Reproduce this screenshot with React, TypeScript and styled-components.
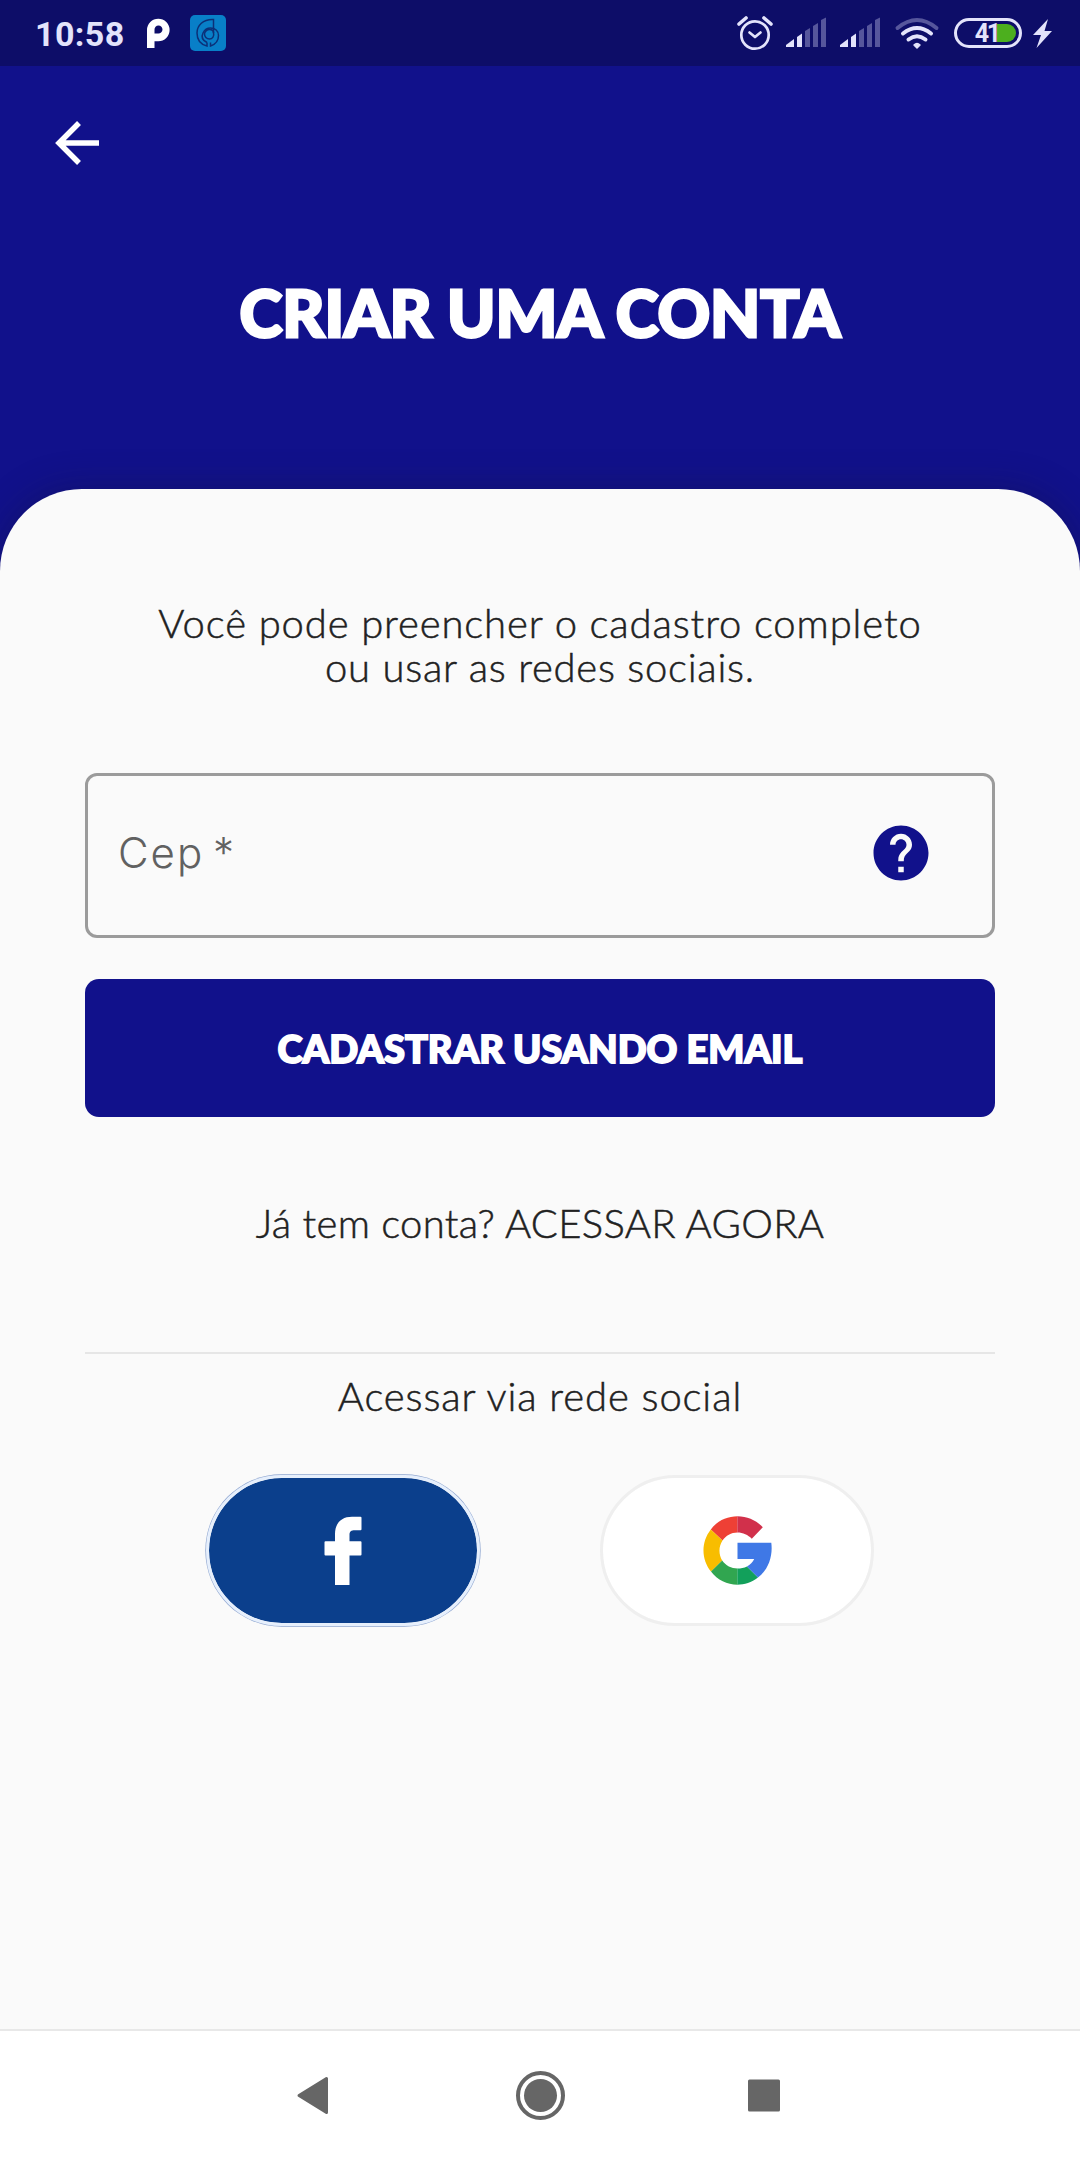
import React from "react";
import styled, { createGlobalStyle } from "styled-components";
import { MdHelp } from "react-icons/md";

const navy = "#11118b";
const light = "#e3e3fb";
const dim = "#56569c";

const GlobalStyle = createGlobalStyle`
  * { box-sizing: border-box; }
  html, body { margin: 0; padding: 0; background: #fafafa; }
  button { border: 0; padding: 0; margin: 0; background: none; font: inherit; }
  svg { display: block; flex: none; }
`;

const Screen = styled.div`
  width: 1080px;
  height: 2160px;
  display: flex;
  flex-direction: column;
  overflow: hidden;
  background: ${navy};
  font-family: Lato, "Open Sans", sans-serif;
`;

const StatusBar = styled.div`
  height: 66px;
  flex: none;
  display: flex;
  align-items: center;
  justify-content: space-between;
  padding: 0 25px 0 35px;
  background: #0d0d68;
`;

const StatusGroup = styled.div`
  display: flex;
  align-items: center;
`;

const Clock = styled.span`
  font: 700 34px/40px Roboto, sans-serif;
  letter-spacing: 0.4px;
  color: ${light};
  width: 111px;
  padding-top: 2px;
`;

const Battery = styled.div`
  width: 68px;
  height: 30px;
  margin: 0 9px 0 8px;
  border: 3px solid ${light};
  border-radius: 15px;
  padding: 3px;
  display: flex;
  justify-content: flex-end;
  align-items: center;
`;

const Level = styled.span`
  font: 700 25px/18px Roboto, sans-serif;
  letter-spacing: -2.2px;
  color: ${light};
  position: relative;
  z-index: 1;
  margin-right: -2px;
  padding-top: 2px;
`;

const Charge = styled.span`
  width: 19px;
  height: 18px;
  border-radius: 0 9px 9px 0;
  background: #4caf1e;
`;

const Header = styled.header`
  height: 423px;
  flex: none;
  display: flex;
  flex-direction: column;
`;

const BackButton = styled.button`
  width: 66px;
  height: 66px;
  margin: 44px 0 0 44px;
`;

const Title = styled.h1`
  margin: 96px 0 0;
  text-align: center;
  font-size: 65px;
  line-height: 80px;
  font-weight: 900;
  letter-spacing: -0.1px;
  color: #fff;
  -webkit-text-stroke: 2.8px #fff;
`;

const Sheet = styled.main`
  flex: 1;
  display: flex;
  flex-direction: column;
  padding: 112px 85px 0;
  background: #fafafa;
  border-radius: 82px 82px 0 0;
  box-shadow: 0 0 36px rgba(20, 20, 70, 0.45);
`;

const Copy = styled.p<{ $spacing: number; $top?: number }>`
  margin: ${(p) => p.$top ?? 0}px 0 0;
  text-align: center;
  font-size: 40px;
  line-height: 44px;
  font-weight: 300;
  letter-spacing: ${(p) => p.$spacing}px;
  color: #212121;
  -webkit-text-stroke: 0.5px #212121;
  white-space: nowrap;
`;

const Field = styled.label`
  height: 165px;
  flex: none;
  margin-top: 84px;
  padding: 0 58px 5px 30px;
  display: flex;
  align-items: center;
  justify-content: space-between;
  border: 3px solid #9b9b9b;
  border-radius: 12px;
`;

const Placeholder = styled.span`
  font: 300 42px/50px Inter, sans-serif;
  letter-spacing: 2px;
  word-spacing: -5px;
  color: #616161;
`;

const SubmitButton = styled.button`
  height: 137.5px;
  flex: none;
  margin-top: 41px;
  border-radius: 14px;
  background: ${navy};
  color: #fff;
  font-size: 38px;
  line-height: 46px;
  font-weight: 900;
  letter-spacing: 0;
  -webkit-text-stroke: 1.8px #fff;
`;

const Divider = styled.hr`
  width: 100%;
  height: 2px;
  margin: 107px 0 0;
  border: 0;
  background: #e6e6e6;
  flex: none;
`;

const SocialRow = styled.div`
  display: flex;
  justify-content: center;
  gap: 120px;
  margin-top: 57px;
`;

const SocialButton = styled.button<{ $fill: string; $ring: string; $outline: string }>`
  width: 274px;
  height: 151px;
  display: flex;
  align-items: center;
  justify-content: center;
  border: 3px solid ${(p) => p.$ring};
  border-radius: 76px;
  background: ${(p) => p.$fill};
  background-clip: padding-box;
  box-shadow: 0 0 0 0.7px ${(p) => p.$outline};
`;

const NavBar = styled.nav`
  height: 131px;
  flex: none;
  display: flex;
  justify-content: center;
  align-items: center;
  gap: 158px;
  border-top: 2px solid #e8e8e8;
  background: #fff;
`;

const NavButton = styled.button`
  width: 66px;
  height: 66px;
`;

const barShapes = [
  "M786 45 L794 39 V47 H786Z",
  "M797 37 L802 33.500 V47 H797Z",
  "M805 31 L810 28 V47 H805Z",
  "M813 26 L818 23 V47 H813Z",
  "M821 20 L826 17.500 V47 H821Z",
];

const Signal = () => (
  <svg width="54" height="66" viewBox="780 0 54 66">
    {barShapes.map((d, i) => (
      <path key={d} d={d} fill={i < 2 ? light : dim} />
    ))}
  </svg>
);

const Alarm = () => (
  <svg width="44" height="66" viewBox="736 0 44 66" fill="none" stroke={light} strokeLinecap="round">
    <circle cx="755" cy="35" r="13.700" strokeWidth="2.700" />
    <path d="M749.500 32.500 L755 37 L760.500 32.500" strokeWidth="2.700" strokeLinejoin="round" />
    <path d="M739 24 L746 18 M764 18 L771 24" strokeWidth="3.600" />
  </svg>
);

const Wifi = () => (
  <svg width="58" height="66" viewBox="888 0 58 66" fill="none" strokeWidth="4" strokeLinecap="round">
    <path d="M897.500 28 Q917 12 936.500 28" stroke={dim} />
    <path d="M903 33.500 Q917 22.500 931 33.500" stroke={light} />
    <path d="M908.500 39.500 Q917 33 925.500 39.500" stroke={light} />
    <path d="M914 45 Q917 42 920 45 L917 48Z" stroke={light} fill={light} strokeWidth="1.500" strokeLinejoin="round" />
  </svg>
);

const Bolt = () => (
  <svg width="24" height="66" viewBox="1030 0 24 66">
    <path d="M1047 19 L1032 35 H1040 L1035.500 48 L1051 31 H1043.500Z" fill={light} />
  </svg>
);

const ParkingGlyph = () => (
  <svg width="43" height="66" viewBox="146 0 43 66">
    <path
      fillRule="evenodd"
      fill="#fff"
      d="M147 48 V30 A11.300 11.300 0 1 1 158.300 41.300 H154.500 V48Z M154.500 33.500 H158 A4 4 0 1 0 154.500 29.800Z"
    />
  </svg>
);

const AppBadge = () => (
  <svg width="38" height="66" viewBox="189 0 38 66" fill="none" stroke="#0c3078" strokeWidth="1.500">
    <rect x="190" y="15" width="36" height="36" rx="5" fill="#087fc8" stroke="none" />
    <path d="M213.500 33 V19.500 C203 19 197 25.500 197 33 C197 40 201 44.500 207 46 V42.500" />
    <path d="M207 42.500 C203 40.500 201 37 203 33 C204.500 30 207 28 210.500 28 C215 28 218.500 31 218.500 35.500 C218.500 41 215 44.500 210.500 46 V42.500" />
    <path d="M213.500 33 C214.500 36 212.500 39 209.500 39 C206.500 39 204.500 36.500 204.500 34 C204.500 31.500 207 29.500 209.500 29.500 C212 29.500 213.500 31 213.500 33Z" />
  </svg>
);

const BackArrow = () => (
  <svg width="66" height="66" viewBox="44 110 66 66" fill="none" stroke="#fff" strokeWidth="5.500">
    <path d="M99 143 H60 M79 123 L59 143 L79 163" />
  </svg>
);

const FacebookMark = () => (
  <svg width="38" height="69" viewBox="0 0 38 69">
    <path
      fill="#fff"
      d="M11 69 V39.500 H1.500 Q.5 39.500 .5 38.500 V26.300 Q.5 25.300 1.500 25.300 H11 V18 C11 7 17.500 .7 28 .7 H36.500 Q37.500 .7 37.500 1.700 V13.200 Q37.500 14.200 36.500 14.200 H31 C27 14.200 25.500 15.500 25.500 19 V25.300 H36.500 Q37.500 25.300 37.500 26.300 V38.500 Q37.500 39.500 36.500 39.500 H25.500 V69Z"
    />
  </svg>
);

const GoogleMark = () => (
  <svg width="69" height="69" viewBox="0 0 69 69">
    <path fill="#ee4035" d="M34.500 .3 C24 .3 14 5 7.800 13.500 L19.500 24.500 C23 19.500 28 16.500 34.500 16.500Z" />
    <path fill="#d1304b" d="M34.400 .3 V16.500 C40 16.500 45 19 48.800 22.700 L59.800 11.200 C53 4.300 44.500 .3 34.400 .3Z" />
    <path fill="#f8bd00" d="M7.800 13.500 C-2 26 -2 43 8 55.500 L19.200 44.500 C15.500 38.500 15.500 30.500 19.500 24.500Z" />
    <path fill="#31a650" d="M8 55.500 C14.500 64 24 68.700 34.500 68.700 V52.500 C28.500 52.500 22.500 49.500 19.200 44.500Z" />
    <path fill="#12a05b" d="M34.400 52.500 V68.700 C41.500 68.700 48.500 66.500 55 61.500 L44 50.500 C41 52 38 52.500 34.400 52.500Z" />
    <path fill="#3f78e6" d="M34.500 26.700 H68.300 C70 40 65.500 53.500 55 61.500 L44 50.500 C47.200 48.700 49.800 46 51.200 43 H34.500Z" />
  </svg>
);

export default function App() {
  return (
    <>
      <GlobalStyle />
      <Screen>
        <StatusBar>
          <StatusGroup>
            <Clock>10:58</Clock>
            <ParkingGlyph />
            <AppBadge />
          </StatusGroup>
          <StatusGroup>
            <Alarm />
            <Signal />
            <Signal />
            <Wifi />
            <Battery>
              <Level>41</Level>
              <Charge />
            </Battery>
            <Bolt />
          </StatusGroup>
        </StatusBar>

        <Header>
          <BackButton aria-label="Voltar">
            <BackArrow />
          </BackButton>
          <Title>CRIAR UMA CONTA</Title>
        </Header>

        <Sheet>
          <Copy $spacing={0.88}>Você pode preencher o cadastro completo</Copy>
          <Copy $spacing={0.75}>ou usar as redes sociais.</Copy>
          <Field>
            <Placeholder>Cep *</Placeholder>
            <MdHelp size={66} color={navy} />
          </Field>
          <SubmitButton>CADASTRAR USANDO EMAIL</SubmitButton>
          <Copy $spacing={0.3} $top={84}>Já tem conta? ACESSAR AGORA</Copy>
          <Divider />
          <Copy $spacing={0.9} $top={20}>Acessar via rede social</Copy>
          <SocialRow>
            <SocialButton $fill="#0b3f8c" $ring="#e6effc" $outline="#8fa6d0" aria-label="Facebook">
              <FacebookMark />
            </SocialButton>
            <SocialButton $fill="#fff" $ring="#efefef" $outline="transparent" aria-label="Google">
              <GoogleMark />
            </SocialButton>
          </SocialRow>
        </Sheet>

        <NavBar>
          <NavButton aria-label="Voltar">
            <svg width="66" height="66" viewBox="0 0 66 66">
              <path d="M16 32.500 L43.500 15.500 V49.500Z" fill="#666" stroke="#666" strokeWidth="3" strokeLinejoin="round" />
            </svg>
          </NavButton>
          <NavButton aria-label="Início">
            <svg width="66" height="66" viewBox="0 0 66 66">
              <circle cx="33.500" cy="32.500" r="22.500" fill="none" stroke="#666" strokeWidth="4" />
              <circle cx="33.500" cy="32.500" r="16.500" fill="#666" />
            </svg>
          </NavButton>
          <NavButton aria-label="Recentes">
            <svg width="66" height="66" viewBox="0 0 66 66">
              <rect x="17" y="16.500" width="32" height="32" rx="1.500" fill="#666" />
            </svg>
          </NavButton>
        </NavBar>
      </Screen>
    </>
  );
}
